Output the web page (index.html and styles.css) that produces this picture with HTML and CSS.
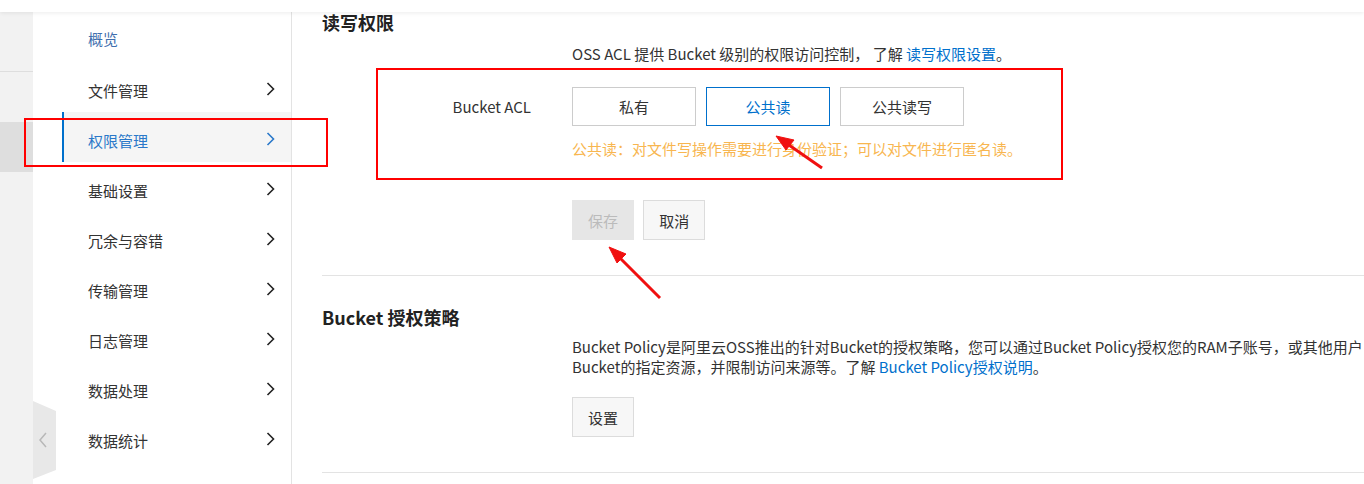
FILE: index.html
```html
<!DOCTYPE html>
<html lang="zh-CN">
<head>
    <meta charset="UTF-8">
    <meta name="viewport" content="width=device-width, initial-scale=1.0">
    <title>读写权限</title>
    <link rel="stylesheet" href="styles.css">
</head>
<body>

    <div class="topbar"></div>

    <div class="layout">
        <div class="strip">
            <div class="strip-top"></div>
            <div class="strip-active"></div>
        </div>

        <div class="sidebar">
            <ul class="menu">
                <li class="menu-item overview">概览</li>
                <li class="menu-item">文件管理<svg class="chevron" viewBox="0 0 9 14"><polyline points="1.5,1 7.5,7 1.5,13"/></svg></li>
                <li class="menu-item active">权限管理<svg class="chevron" viewBox="0 0 9 14"><polyline points="1.5,1 7.5,7 1.5,13"/></svg></li>
                <li class="menu-item">基础设置<svg class="chevron" viewBox="0 0 9 14"><polyline points="1.5,1 7.5,7 1.5,13"/></svg></li>
                <li class="menu-item">冗余与容错<svg class="chevron" viewBox="0 0 9 14"><polyline points="1.5,1 7.5,7 1.5,13"/></svg></li>
                <li class="menu-item">传输管理<svg class="chevron" viewBox="0 0 9 14"><polyline points="1.5,1 7.5,7 1.5,13"/></svg></li>
                <li class="menu-item">日志管理<svg class="chevron" viewBox="0 0 9 14"><polyline points="1.5,1 7.5,7 1.5,13"/></svg></li>
                <li class="menu-item">数据处理<svg class="chevron" viewBox="0 0 9 14"><polyline points="1.5,1 7.5,7 1.5,13"/></svg></li>
                <li class="menu-item">数据统计<svg class="chevron" viewBox="0 0 9 14"><polyline points="1.5,1 7.5,7 1.5,13"/></svg></li>
            </ul>
            <svg class="collapse-handle" viewBox="0 0 23 78">
                <polygon points="0,0 23,10 23,69 0,78" fill="#e8e8e8"/>
                <polyline points="13,32 7,39 13,46" fill="none" stroke="#b8b8b8" stroke-width="1.5"/>
            </svg>
        </div>

        <div class="main">
            <div class="section">
                <h2 class="section-title">读写权限</h2>
                <div class="form-row">
                    <div class="form-label"></div>
                    <div class="form-field">OSS ACL 提供 Bucket 级别的权限访问控制， 了解 <a class="link">读写权限设置</a>。</div>
                </div>
                <div class="form-row acl-row">
                    <div class="form-label">Bucket ACL</div>
                    <div class="form-field">
                        <div class="radio-group">
                            <button type="button" class="radio-btn">私有</button>
                            <button type="button" class="radio-btn selected">公共读</button>
                            <button type="button" class="radio-btn">公共读写</button>
                        </div>
                        <div class="hint">公共读：对文件写操作需要进行身份验证；可以对文件进行匿名读。</div>
                    </div>
                </div>
                <div class="form-row actions">
                    <div class="form-label"></div>
                    <div class="form-field">
                        <button type="button" class="btn disabled">保存</button>
                        <button type="button" class="btn">取消</button>
                    </div>
                </div>
            </div>

            <div class="section">
                <h2 class="section-title">Bucket 授权策略</h2>
                <div class="form-row policy-row">
                    <div class="form-label"></div>
                    <div class="form-field policy-text">
                        Bucket Policy是阿里云OSS推出的针对Bucket的授权策略，您可以通过Bucket Policy授权您的RAM子账号，或其他用户<br>
                        Bucket的指定资源，并限制访问来源等。了解 <a class="link">Bucket Policy授权说明</a>。
                    </div>
                </div>
                <div class="form-row actions policy-actions">
                    <div class="form-label"></div>
                    <div class="form-field">
                        <button type="button" class="btn">设置</button>
                    </div>
                </div>
            </div>
        </div>
    </div>

    <!-- annotations -->
    <div class="mark mark-menu"></div>
    <div class="mark mark-acl"></div>
    <svg class="arrows" viewBox="0 0 1364 484">
        <g stroke="#f01010" stroke-width="3" fill="#f01010">
            <line x1="822" y1="168" x2="786" y2="143"/>
            <polygon points="776,136 794,140 786,150" stroke-width="1"/>
            <line x1="660" y1="298" x2="618" y2="256"/>
            <polygon points="609,247 626,254 617,263" stroke-width="1"/>
        </g>
    </svg>

</body>
</html>
```

FILE: styles.css
```css
body {
    margin: 0;
    height: 484px;
    overflow: hidden;
    font-family: "Noto Sans CJK SC", sans-serif;
    font-size: 15px;
    color: #333;
    background-color: #fff;
}
.topbar {
    height: 12px;
    background-color: #fff;
    box-shadow: 0 1px 4px rgba(0, 0, 0, 0.08);
    position: relative;
    z-index: 2;
}
.layout {
    display: flex;
    height: 472px;
}
.strip {
    width: 33px;
    flex-shrink: 0;
    background-color: #f2f2f2;
}
.strip-top {
    height: 59px;
    border-bottom: 1px solid #dedede;
}
.strip-active {
    height: 50px;
    margin-top: 50px;
    background-color: #dedede;
}
.sidebar {
    width: 258px;
    flex-shrink: 0;
    border-right: 1px solid #e3e3e3;
    position: relative;
}
.menu {
    list-style: none;
    margin: 0;
    padding: 0;
}
.menu-item {
    height: 50px;
    box-sizing: border-box;
    margin-left: 29px;
    padding: 7px 16px 0 26px;
    display: flex;
    align-items: center;
    justify-content: space-between;
    color: #333;
}
.menu-item.overview {
    color: #3f6fae;
    padding-top: 2px;
}
.menu-item.active {
    background-color: #f5f5f5;
    border-left: 2px solid #0070cc;
    padding-left: 24px;
    color: #2a78c9;
}
.chevron {
    width: 9px;
    height: 14px;
    fill: none;
    stroke: #222;
    stroke-width: 1.6;
    margin-top: -3px;
}
.menu-item.active .chevron {
    stroke: #2a78c9;
}
.collapse-handle {
    position: absolute;
    left: 0;
    top: 389px;
    width: 23px;
    height: 78px;
}
.main {
    flex: 1;
    padding-left: 30px;
    min-width: 0;
}
.section {
    border-bottom: 1px solid #e3e3e3;
    padding-bottom: 35px;
}
.section + .section {
    padding-top: 31px;
}
.section-title {
    margin: -2px 0 2px;
    font-size: 18px;
    line-height: 24px;
    font-weight: bold;
    color: #222;
}
.form-row {
    display: grid;
    grid-template-columns: 209px 1fr;
    column-gap: 41px;
    margin-top: 10px;
    line-height: 20px;
}
.form-label {
    text-align: right;
}
.acl-row {
    margin-top: 23px;
}
.acl-row .form-label {
    line-height: 39px;
}
.radio-group {
    display: flex;
    gap: 10px;
}
.radio-btn {
    width: 124px;
    height: 39px;
    border: 1px solid #ccc;
    background-color: #fff;
    font-family: inherit;
    font-size: 15px;
    color: #333;
    padding: 0;
}
.radio-btn.selected {
    border-color: #0070cc;
    color: #0070cc;
}
.hint {
    margin-top: 13px;
    color: #f8b650;
}
.actions {
    margin-top: 41px;
}
.btn {
    width: 62px;
    height: 40px;
    margin-right: 6px;
    border: 1px solid #dcdcdc;
    background-color: #f7f7f7;
    font-family: inherit;
    font-size: 15px;
    color: #333;
    padding: 0;
}
.btn.disabled {
    border-color: #e6e6e6;
    background-color: #e6e6e6;
    color: #bbb;
}
.link {
    color: #0070cc;
}
.policy-row {
    margin-top: 8px;
}
.policy-text {
    white-space: nowrap;
    overflow: hidden;
}
.policy-actions {
    margin-top: 20px;
}
.mark {
    position: absolute;
    border: 2px solid #f00;
    box-sizing: border-box;
}
.mark-menu {
    left: 24px;
    top: 118px;
    width: 304px;
    height: 49px;
}
.mark-acl {
    left: 376px;
    top: 68px;
    width: 687px;
    height: 112px;
}
.arrows {
    position: absolute;
    left: 0;
    top: 0;
    width: 1364px;
    height: 484px;
    pointer-events: none;
}
```
